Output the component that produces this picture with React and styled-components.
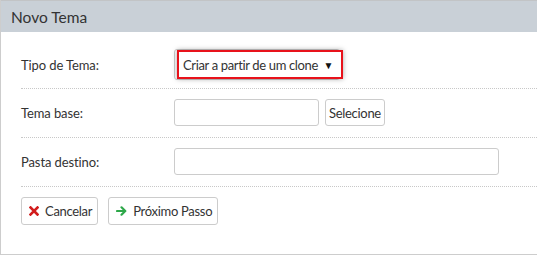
import React from 'react'
import styled, { createGlobalStyle } from 'styled-components'

const Global = createGlobalStyle`
  html, body {
    margin: 0;
    padding: 0;
    background: #fff;
    overflow: hidden;
  }
  body {
    font-family: Lato, "Open Sans", sans-serif;
    color: #333;
  }
`

const Panel = styled.div`
  width: 537px;
  height: 255px;
  border-left: 1px solid #cdcdcd;
  border-bottom: 1px solid #cdcdcd;
  box-sizing: border-box;
  display: flex;
  flex-direction: column;
`

const Header = styled.div`
  height: 32px;
  background: #c9d0d7;
  border-top: 1px solid #c2c4c6;
  box-sizing: border-box;
  display: flex;
  align-items: center;
  padding-left: 10px;
  font-size: 15.5px;
  color: #333;
`

const Body = styled.div`
  padding: 17px 0 0 20px;
`

const Row = styled.div`
  display: flex;
  align-items: center;
  padding: ${(p) => p.$pad || '10px 0 11px'};
  border-bottom: 1px dotted #c8c8c8;
`

const Label = styled.div`
  width: 153px;
  font-size: 13px;
  letter-spacing: -0.1px;
  color: #333;
`

const SelectBox = styled.div`
  position: relative;
  width: 166px;
  height: 31px;
  border: 1px solid #ccc;
  border-radius: 3px;
  box-sizing: border-box;
`

const Highlight = styled.div`
  position: absolute;
  left: 2px;
  top: 0;
  width: 166px;
  height: 29px;
  border: 2px solid #e8121b;
  box-sizing: border-box;
  box-shadow: 0 0 5px rgba(0, 0, 0, 0.35);
  display: flex;
  align-items: center;
  justify-content: space-between;
  padding: 0 8px 0 4px;
  font-size: 13px;
  letter-spacing: -0.35px;
  white-space: nowrap;
  color: #333;
  background: #fff;
`

const Caret = styled.span`
  font-size: 10px;
  color: #111;
`

const Input = styled.div`
  width: ${(p) => p.$w}px;
  height: 27px;
  border: 1px solid #ccc;
  border-radius: 3px;
  box-sizing: border-box;
  background: #fff;
`

const SmallButton = styled.div`
  margin-left: 6px;
  height: 27px;
  padding: 0 3px;
  border: 1px solid #ccc;
  border-radius: 3px;
  box-sizing: border-box;
  display: flex;
  align-items: center;
  font-size: 13px;
  letter-spacing: -0.3px;
  color: #333;
`

const Actions = styled.div`
  display: flex;
  gap: 10px;
  padding-top: 10px;
`

const Button = styled.div`
  height: 28px;
  padding: 0 5px 0 7px;
  border: 1px solid #ccc;
  border-radius: 3px;
  box-sizing: border-box;
  display: flex;
  align-items: center;
  gap: 6px;
  font-size: 13px;
  letter-spacing: -0.3px;
  color: #333;
  background: #fff;
`

const CrossIcon = () => (
  <svg width="10" height="10" viewBox="0 0 10 10">
    <path d="M1.5 1.5 L8.5 8.5 M8.5 1.5 L1.5 8.5" stroke="#d21d1d" strokeWidth="2.6" strokeLinecap="square" />
  </svg>
)

const ArrowIcon = () => (
  <svg width="11" height="10" viewBox="0 0 11 10">
    <path d="M1 5 H9 M5.5 1.3 L9.3 5 L5.5 8.7" stroke="#2ea84a" strokeWidth="2.2" fill="none" strokeLinecap="round" strokeLinejoin="round" />
  </svg>
)

export default function App() {
  return (
    <>
      <Global />
      <Panel>
        <Header>Novo Tema</Header>
        <Body>
          <Row $pad="0 0 8px">
            <Label>Tipo de Tema:</Label>
            <SelectBox>
              <Highlight>
                <span>Criar a partir de um clone</span>
                <Caret>▼</Caret>
              </Highlight>
            </SelectBox>
          </Row>
          <Row>
            <Label>Tema base:</Label>
            <Input $w={145} />
            <SmallButton>Selecione</SmallButton>
          </Row>
          <Row>
            <Label>Pasta destino:</Label>
            <Input $w={325} />
          </Row>
          <Actions>
            <Button>
              <CrossIcon />
              Cancelar
            </Button>
            <Button>
              <ArrowIcon />
              Próximo Passo
            </Button>
          </Actions>
        </Body>
      </Panel>
    </>
  )
}
